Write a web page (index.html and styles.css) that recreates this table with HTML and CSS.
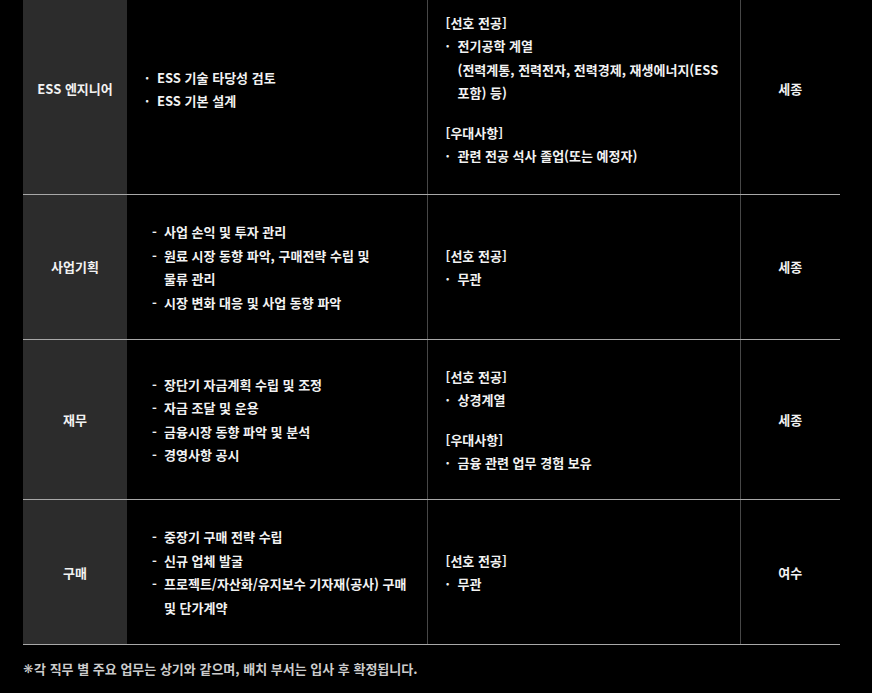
FILE: index.html
```html
<!DOCTYPE html>
<html lang="ko">
<head>
<meta charset="utf-8">
<title>직무 소개</title>
<link rel="stylesheet" href="styles.css">
</head>
<body>
<div class="wrap">
  <table class="jobs">
    <colgroup>
      <col class="c-name">
      <col class="c-task">
      <col class="c-major">
      <col class="c-loc">
    </colgroup>
    <tbody>
      <tr class="first">
        <th class="name">ESS 엔지니어</th>
        <td class="task">
          <ul class="dot">
            <li>ESS 기술 타당성 검토</li>
            <li>ESS 기본 설계</li>
          </ul>
        </td>
        <td class="major">
          <p class="head">[선호 전공]</p>
          <ul class="dot">
            <li>전기공학 계열<br>(전력계통, 전력전자, 전력경제, 재생에너지(ESS 포함) 등)</li>
          </ul>
          <p class="head extra">[우대사항]</p>
          <ul class="dot">
            <li>관련 전공 석사 졸업(또는 예정자)</li>
          </ul>
        </td>
        <td class="loc">세종</td>
      </tr>
      <tr>
        <th class="name">사업기획</th>
        <td class="task dashcell">
          <ul class="dash">
            <li>사업 손익 및 투자 관리</li>
            <li>원료 시장 동향 파악, 구매전략 수립 및<br>물류 관리</li>
            <li>시장 변화 대응 및 사업 동향 파악</li>
          </ul>
        </td>
        <td class="major">
          <p class="head">[선호 전공]</p>
          <ul class="dot">
            <li>무관</li>
          </ul>
        </td>
        <td class="loc">세종</td>
      </tr>
      <tr>
        <th class="name">재무</th>
        <td class="task dashcell">
          <ul class="dash">
            <li>장단기 자금계획 수립 및 조정</li>
            <li>자금 조달 및 운용</li>
            <li>금융시장 동향 파악 및 분석</li>
            <li>경영사항 공시</li>
          </ul>
        </td>
        <td class="major">
          <p class="head">[선호 전공]</p>
          <ul class="dot">
            <li>상경계열</li>
          </ul>
          <p class="head extra">[우대사항]</p>
          <ul class="dot">
            <li>금융 관련 업무 경험 보유</li>
          </ul>
        </td>
        <td class="loc">세종</td>
      </tr>
      <tr>
        <th class="name">구매</th>
        <td class="task dashcell">
          <ul class="dash">
            <li>중장기 구매 전략 수립</li>
            <li>신규 업체 발굴</li>
            <li>프로젝트/자산화/유지보수 기자재(공사) 구매<br>및 단가계약</li>
          </ul>
        </td>
        <td class="major">
          <p class="head">[선호 전공]</p>
          <ul class="dot">
            <li>무관</li>
          </ul>
        </td>
        <td class="loc">여수</td>
      </tr>
    </tbody>
  </table>
  <p class="note"><span class="mark">❋</span>각 직무 별 주요 업무는 상기와 같으며, 배치 부서는 입사 후 확정됩니다.</p>
</div>
</body>
</html>
```

FILE: styles.css
```css
html, body {
  margin: 0;
  padding: 0;
  background: #000;
}

body {
  color: #f2f2f2;
  font-family: "Noto Sans CJK KR", "Noto Sans", sans-serif;
  font-size: 13px;
  font-weight: 700;
  line-height: 1.8;
  letter-spacing: 0;
  word-break: keep-all;
}

.wrap {
  padding-left: 23px;
  margin-top: -14px;
}

.jobs {
  width: 817px;
  table-layout: fixed;
  border-collapse: collapse;
  border-spacing: 0;
}

.c-name { width: 104px; }
.c-task { width: 300px; }
.c-major { width: 313px; }
.c-loc { width: 100px; }

.jobs th,
.jobs td {
  padding: 25px 12px 25px 18px;
  vertical-align: middle;
  border-bottom: 1px solid #a8a8a8;
  text-align: left;
  font-weight: 700;
}

.jobs tr.first > th,
.jobs tr.first > td {
  padding-bottom: 27px;
}

.jobs th.name {
  background: #2c2c2c;
  text-align: center;
  padding-left: 4px;
  padding-right: 4px;
}

.jobs td.dashcell {
  padding-left: 25px;
}

.jobs td.major,
.jobs td.loc {
  border-left: 1px solid #474747;
}

.jobs td.loc {
  text-align: center;
  padding-left: 4px;
  padding-right: 4px;
}

ul {
  margin: 0;
  padding: 0;
  list-style: none;
}

li {
  display: flex;
}

li::before {
  flex: 0 0 12px;
  width: 12px;
}

ul.dot li::before {
  content: "·";
}

ul.dash li::before {
  content: "-";
}

.head {
  margin: 0;
}

.head.extra {
  margin-top: 16px;
}

.note {
  margin: 12px 0 0;
  color: #cccccc;
}

.mark {
  font-family: "DejaVu Sans", sans-serif;
  font-size: 12px;
  margin-right: 1px;
  vertical-align: 1px;
}
```
